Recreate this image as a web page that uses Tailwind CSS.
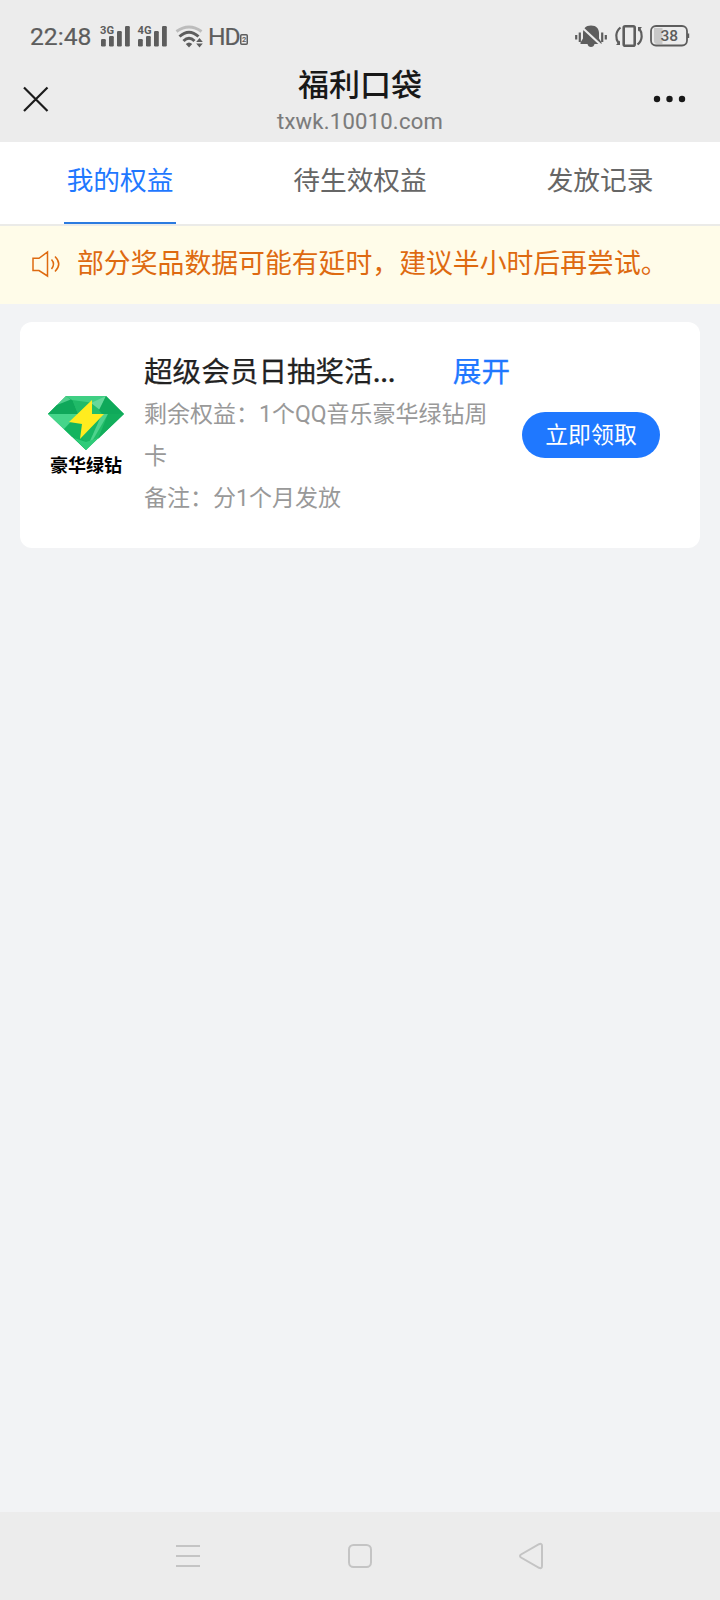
<!DOCTYPE html>
<html lang="zh-CN">
<head>
<meta charset="utf-8">
<meta name="viewport" content="width=device-width, initial-scale=1">
<title>福利口袋</title>
<script src="https://cdn.jsdelivr.net/npm/@tailwindcss/browser@4"></script>
</head>
<body class="flex h-[1600px] w-[720px] flex-col overflow-hidden bg-[#f2f3f5] font-['Roboto','Noto_Sans_CJK_SC',sans-serif]">
  <div class="h-[142px] shrink-0 bg-[#ececec]">
    <!-- Status bar -->
    <div class="flex h-[72px] items-center pl-[30px] pr-[30px] text-[#5d5d5d]">
      <span class="w-[70px] pt-[2px] text-[24.700px] leading-[30px] [-webkit-text-stroke:0.2px]">22:48</span>
      <svg class="h-[22px] w-[30px] overflow-visible" viewBox="0 0 30 22" fill="currentColor">
        <text x="0" y="8.500" font-size="11" font-weight="700" textLength="14" lengthAdjust="spacingAndGlyphs">3G</text>
        <rect x="1" y="14" width="4.800" height="7.500" rx="1.200"/><rect x="9" y="11" width="4.800" height="10.500" rx="1.200"/><rect x="17" y="6" width="4.800" height="15.500" rx="1.200"/><rect x="25" y="1" width="4.800" height="20.500" rx="1.200"/>
      </svg>
      <svg class="ml-[7px] h-[22px] w-[30px] overflow-visible" viewBox="0 0 30 22" fill="currentColor">
        <text x="0.500" y="8.500" font-size="11" font-weight="700" textLength="14" lengthAdjust="spacingAndGlyphs">4G</text>
        <rect x="1" y="14" width="4.800" height="7.500" rx="1.200"/><rect x="9" y="11" width="4.800" height="10.500" rx="1.200"/><rect x="17" y="6" width="4.800" height="15.500" rx="1.200"/><rect x="25" y="1" width="4.800" height="20.500" rx="1.200"/>
      </svg>
      <svg class="ml-[8px] h-[24px] w-[28px]" viewBox="0 0 28 24" fill="none" stroke="currentColor" stroke-width="3">
        <path d="M1.500 7.500Q14 -1.500 26.500 7.500" stroke="#bcbcbc"/>
        <path d="M4.500 12.500Q14 4 23.500 12.500"/><path d="M8.500 17Q14 11.500 19.500 17"/>
        <path d="M10.800 20Q14 17 17.200 20L14 23.500Z" fill="currentColor" stroke="none"/>
        <path d="M24.500 14L27.800 18H21.200ZM21.200 19.500H27.800L24.500 23.500Z" fill="currentColor" stroke="none"/>
      </svg>
      <span class="ml-[5px] pt-[2px] text-[24.700px] leading-[30px] tracking-[-1px] [-webkit-text-stroke:0.2px]">HD</span>
      <svg class="mt-[6px] h-[11px] w-[8px]" viewBox="0 0 8 11"><rect x=".75" y=".75" width="6.500" height="9.500" rx="1" fill="none" stroke="currentColor" stroke-width="1.500"/><text x="2" y="8.400" font-size="7.500" font-weight="700" fill="currentColor">2</text></svg>
      <div class="ml-auto flex items-center">
        <svg class="h-[24px] w-[32px]" viewBox="0 0 32 24" fill="currentColor">
          <path d="M16 1.500C21.500 1.500 24 5 24 9V14.500L26.500 18.500V20H19.500C19 22 18 23 16 23S13 22 12.500 20H5.500V18.500L8 14.500V9C8 5 10.500 1.500 16 1.500Z"/>
          <path d="M6 2.500L27 22" stroke="#ececec" stroke-width="2.200"/>
          <path d="M1.200 11V15.500M4.800 8.500V18M27.200 8.500V18M30.800 11V15.500" stroke="currentColor" stroke-width="2.200"/>
        </svg>
        <svg class="ml-[7px] h-[24px] w-[30px]" viewBox="0 0 30 24" fill="none" stroke="currentColor" stroke-width="2.600">
          <rect x="9.700" y="2.200" width="11" height="19.600" rx="1.500"/>
          <path d="M6.500 3.500C1 8 1.500 15 4.500 19M23.500 20.500C29 16 28.500 9 25.500 5" stroke-width="2.200"/>
          <path d="M2 21H6V16.500ZM28 3H24V7.500Z" fill="currentColor" stroke="none"/>
        </svg>
        <svg class="ml-[6px] h-[24px] w-[40px]" viewBox="0 0 40 24">
          <path d="M4 4H12.500V20H7Q4 20 4 17Z" fill="#c8c8c8"/>
          <rect x="1" y="2" width="36" height="19.500" rx="5" fill="none" stroke="currentColor" stroke-width="1.800"/>
          <path d="M38.200 9.500V14" stroke="currentColor" stroke-width="2"/>
          <text x="19.300" y="17.300" text-anchor="middle" font-size="15.500" font-weight="500" fill="currentColor">38</text>
        </svg>
      </div>
    </div>
    <!-- Page header -->
    <div class="flex items-start justify-between px-[22px]">
      <svg class="mt-[14px] h-[26px] w-[64px]" viewBox="0 0 64 26" fill="none" stroke="#1b1b1b" stroke-width="2.200"><path d="M2 1.500L25.500 25M25.500 1.500L2 25"/></svg>
      <div class="-mt-[5px] flex flex-col items-center">
        <h1 class="text-[31px] font-medium leading-[38px] text-[#181818]">福利口袋</h1>
        <p class="mt-[4px] text-[22px] leading-[26px] tracking-[0.25px] text-[#7b7b7b] [-webkit-text-stroke:0.1px]">txwk.10010.com</p>
      </div>
      <svg class="mt-[22px] h-[10px] w-[64px]" viewBox="0 0 64 10" fill="#181818"><circle cx="23" cy="5" r="3.200"/><circle cx="35.500" cy="5" r="3.200"/><circle cx="48" cy="5" r="3.200"/></svg>
    </div>
  </div>
  <!-- Tabs -->
  <div class="grid h-[84px] shrink-0 grid-cols-3 border-b-2 border-[#ebebe8] bg-white text-center text-[26.700px] leading-[40px] text-[#666]">
    <div class="flex justify-center"><span class="w-[112px] whitespace-nowrap border-b-2 border-[#2b7be0] pt-[19px] text-[#1f78ff]">我的权益</span></div>
    <div class="pt-[19px]">待生效权益</div>
    <div class="pt-[19px]">发放记录</div>
  </div>
  <!-- Notice -->
  <div class="flex h-[78px] shrink-0 items-center bg-[#fffce9] pl-[32px] text-[#de6a10]">
    <svg class="-mt-[2px] h-[28px] w-[29px]" viewBox="0 0 29 28" fill="none" stroke="currentColor" stroke-width="1.500"><path d="M1 8.300H7L15.500 2V26L7 20.500H1Z"/><path d="M19.500 9.500Q23.500 14 19.500 19M23 6.500Q30.500 14 23 21.500"/></svg>
    <p class="-mt-[2px] ml-[16px] whitespace-nowrap text-[26.850px] leading-[40px]">部分奖品数据可能有延时，建议半小时后再尝试。</p>
  </div>
  <!-- Benefit card -->
  <div class="mx-5 mt-[18px] flex h-[226px] shrink-0 items-center rounded-xl bg-white pl-[28px] pr-[40px]">
    <div class="flex w-[76px] flex-col items-center pt-[5px]">
      <svg class="h-[54px] w-[76px]" viewBox="0 0 76 54">
        <path d="M18 0H58L76 18L38 54L0 18Z" fill="#22bd69"/>
        <path d="M18 0L9 9L22 18H0Z" fill="#22b869"/>
        <path d="M18 0L24 5L9 9Z" fill="#4fce8c"/>
        <path d="M24 3L30 18H0L9 9Z" fill="#0fa85a"/>
        <path d="M24 3L41 5L30 18Z" fill="#20ba68"/>
        <path d="M18 0H58L46 7L24 4Z" fill="#3fcf83"/>
        <path d="M58 0L52 14L43 7Z" fill="#66d89c"/>
        <path d="M58 0L76 18H54L51 14Z" fill="#0fa95a"/>
        <path d="M0 18H30L24 41Z" fill="#45d58a"/>
        <path d="M16 33L30 18L38 54Z" fill="#13b45f"/>
        <path d="M30 18H54L38 54Z" fill="#17b763"/>
        <path d="M54 18H60L46 42L38 54Z" fill="#4fd38d"/>
        <path d="M60 18H76L50 43Z" fill="#12ae5c"/>
        <path d="M26 42L38 46L50 42L38 54Z" fill="#2fcb79"/>
        <path d="M44 4L21 26L34 28L32 43L56 18H44Z" fill="#ffec1f"/>
      </svg>
      <span class="mt-[3px] whitespace-nowrap text-[18px] font-bold leading-[26px] text-black">豪华绿钻</span>
    </div>
    <div class="ml-[20px] w-[366px] self-start pt-[29px]">
      <div class="flex justify-between text-[28.600px] leading-[42px] [-webkit-text-stroke:0.25px]">
        <h2 class="w-[252px] whitespace-nowrap text-[#222]">超级会员日抽奖活<span class="font-medium tracking-[-0.400px]">...</span></h2>
        <span class="whitespace-nowrap text-[#1f78ff]">展开</span>
      </div>
      <p class="mt-px w-[350px] text-[23px] leading-[42px] text-[#999]">剩余权益：1个QQ音乐豪华绿钻周卡<br>备注：分1个月发放</p>
    </div>
    <button class="ml-auto h-[46px] w-[138px] rounded-full bg-[#1f78ff] pt-px text-[22.900px] leading-[46px] text-white">立即领取</button>
  </div>
  <!-- System navigation -->
  <div class="mt-auto flex h-[88px] shrink-0 items-center justify-between bg-[#ececec] pl-[175px] pr-[175px]">
    <svg class="h-[26px] w-[26px]" viewBox="0 0 26 26" stroke="#c4c4c4" stroke-width="2"><path d="M1 3H25M1 13H25M1 23H25"/></svg>
    <svg class="h-[26px] w-[26px]" viewBox="0 0 26 26" fill="none" stroke="#c4c4c4" stroke-width="2"><rect x="2" y="2" width="22" height="22" rx="4.500"/></svg>
    <svg class="h-[28px] w-[26px]" viewBox="0 0 26 28" fill="none" stroke="#c4c4c4" stroke-width="2"><path d="M2 12.500Q0 14 2 15.500L20 25.800Q23 27 23 24V4Q23 1 20 2.200Z"/></svg>
  </div>
</body>
</html>
